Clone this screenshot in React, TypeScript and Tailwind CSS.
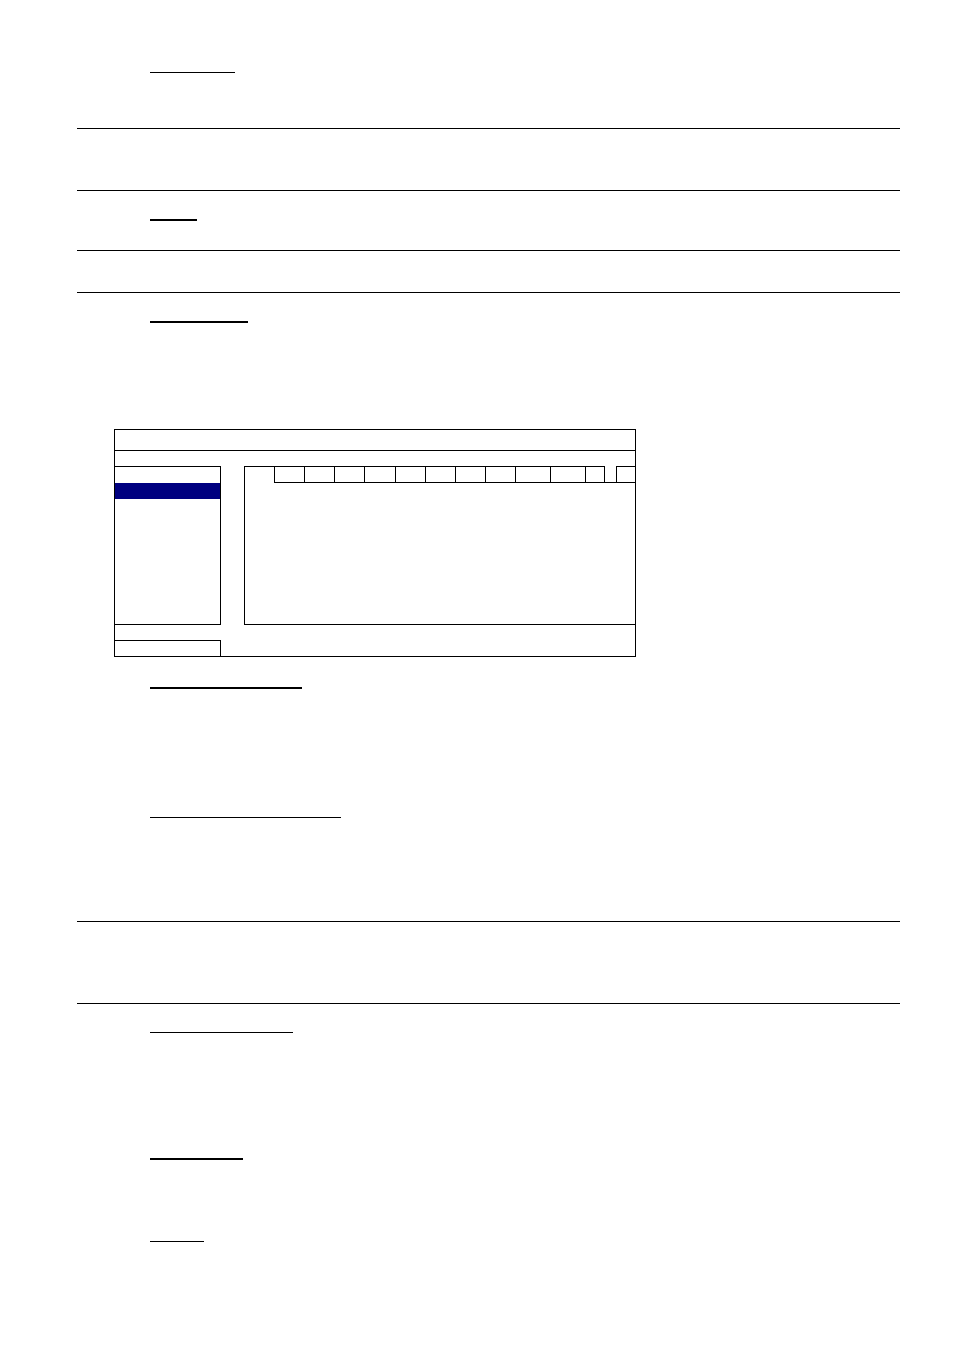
import React from 'react';

// horizontal rule across the text block
const Rule: React.FC<{ mt: string }> = ({ mt }) => (
  <div className={`${mt} ml-[77px] w-[823px] h-px bg-black`} />
);

const TabCell: React.FC<{ w: string; top?: boolean }> = ({ w, top = true }) => (
  <div className={`${w} h-[17px] border-l border-b border-black ${top ? 'border-t' : ''}`} />
);

const MenuDiagram: React.FC = () => (
  <div className="mt-[106px] ml-[114px] w-[522px] h-[228px] border border-black flex flex-col">
    {/* title bar */}
    <div className="h-[21px] border-b border-black" />
    <div className="h-[15px]" />

    <div className="flex h-[159px]">
      {/* left menu list */}
      <div className="w-[106px] border-t border-r border-b border-black flex flex-col">
        <div className="h-[16px]" />
        <div className="h-[16px] bg-[#000080]" />
      </div>
      <div className="w-[23px]" />

      {/* right content panel */}
      <div className="w-[391px] border-l border-b border-black">
        <div className="flex">
          <div className="w-[29px] h-[17px] border-t border-black" />
          <TabCell w="w-[30px]" />
          <TabCell w="w-[30px]" />
          <TabCell w="w-[30px]" />
          <TabCell w="w-[31px]" />
          <TabCell w="w-[30px]" />
          <TabCell w="w-[30px]" />
          <TabCell w="w-[30px]" />
          <TabCell w="w-[30px]" />
          <TabCell w="w-[35px]" />
          <TabCell w="w-[35px]" />
          <TabCell w="w-[19px]" />
          <TabCell w="w-[12px]" top={false} />
          <TabCell w="w-[19px]" />
        </div>
      </div>
    </div>

    <div className="h-[15px]" />
    {/* bottom left button */}
    <div className="w-[106px] h-[16px] border-t border-r border-black" />
  </div>
);

export default function App() {
  return (
    <div className="w-[954px] h-[1350px] bg-white flex flex-col font-['Liberation_Sans',sans-serif]">
      <div className="mt-[72px] ml-[150px] w-[85px] h-px bg-black" />
      <Rule mt="mt-[55px]" />
      <Rule mt="mt-[61px]" />
      <div className="mt-[28px] ml-[150px] w-[47px] h-[2px] bg-black" />
      <Rule mt="mt-[29px]" />
      <Rule mt="mt-[41px]" />
      <div className="mt-[28px] ml-[150px] w-[98px] h-[2px] bg-black" />

      <MenuDiagram />

      <div className="mt-[30px] ml-[150px] w-[152px] h-[2px] bg-black" />
      <div className="mt-[128px] ml-[150px] w-[191px] h-px bg-black" />
      <Rule mt="mt-[103px]" />
      <Rule mt="mt-[81px]" />
      <div className="mt-[28px] ml-[150px] w-[143px] h-px bg-black" />
      <div className="mt-[125px] ml-[150px] w-[93px] h-[2px] bg-black" />
      <div className="mt-[81px] ml-[150px] w-[54px] h-px bg-black" />
    </div>
  );
}
